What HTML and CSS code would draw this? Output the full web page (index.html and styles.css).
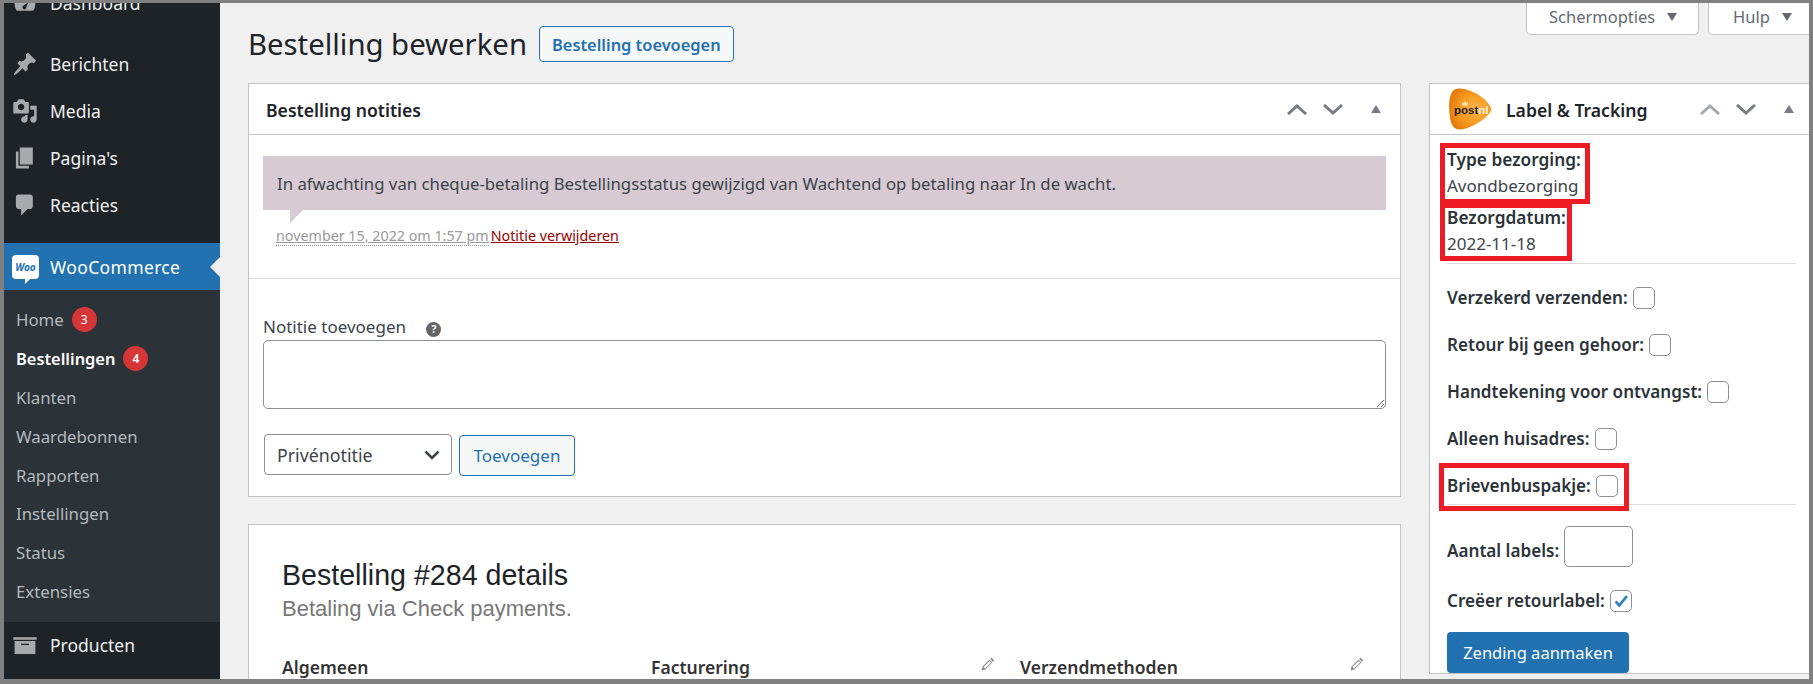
FILE: index.html
```html
<!DOCTYPE html>
<html lang="nl">

<head>
  <meta charset="UTF-8">
  <title>Bestelling bewerken</title>
  <link rel="stylesheet" href="styles.css">
</head>

<body>

  <div class="frame">

    <aside class="sidebar">
      <ul class="menu menu-first">
        <li class="menu-item">
          <svg class="menu-icon" viewBox="0 0 20 20"><path d="M3.76 16h12.48A7.97 7.97 0 0 0 18 11a8 8 0 0 0-16 0c0 1.9.66 3.64 1.76 5zM10 6a1 1 0 1 1 0 2 1 1 0 0 1 0-2zm-1 6l4-3-2 4a1.5 1.5 0 1 1-2-1z"/></svg>
          Dashboard
        </li>
      </ul>
      <ul class="menu">
        <li class="menu-item">
          <svg class="menu-icon" viewBox="0 0 20 20"><path d="M10.44 3.02l1.82-1.82 6.36 6.35-1.83 1.82c-1.05-.68-2.48-.57-3.41.36l-.75.75c-.92.93-1.04 2.35-.35 3.41l-1.83 1.82-2.41-2.41-2.8 2.79c-.42.42-3.38 2.71-3.8 2.29s1.86-3.39 2.28-3.81l2.79-2.79L4.1 9.36l1.83-1.82c1.05.69 2.48.57 3.4-.36l.75-.75c.93-.92 1.05-2.35.36-3.41z"/></svg>
          Berichten
        </li>
        <li class="menu-item">
          <svg class="menu-icon" viewBox="0 0 20 20"><path d="M13 11V4c0-.55-.45-1-1-1h-1.67L9 1H5L3.67 3H2c-.55 0-1 .45-1 1v7c0 .55.45 1 1 1h10c.55 0 1-.45 1-1zM7 4.5c1.38 0 2.5 1.12 2.5 2.5S8.38 9.5 7 9.5 4.5 8.38 4.5 7 5.62 4.5 7 4.5zM14 6h5v10.5c0 1.38-1.12 2.5-2.5 2.5S14 17.88 14 16.5s1.12-2.5 2.5-2.5c.17 0 .34.02.5.05V9h-3V6zm-4 8.05V13h2v3.5c0 1.38-1.12 2.5-2.5 2.5S7 17.88 7 16.5 8.12 14 9.5 14c.17 0 .34.02.5.05z"/></svg>
          Media
        </li>
        <li class="menu-item">
          <svg class="menu-icon" viewBox="0 0 20 20"><path d="M6 15V2h10v13H6zm-1 1h8v2H3V5h2v11z"/></svg>
          Pagina's
        </li>
        <li class="menu-item">
          <svg class="menu-icon" viewBox="0 0 20 20"><path d="M5 2h9c1.1 0 2 .9 2 2v7c0 1.1-.9 2-2 2h-2l-5 5v-5H5c-1.1 0-2-.9-2-2V4c0-1.1.9-2 2-2z"/></svg>
          Reacties
        </li>
      </ul>
      <ul class="menu menu-woo">
        <li class="menu-item menu-item-current">
          <span class="woo-logo"><span class="woo-word">Woo</span></span>
          WooCommerce
        </li>
        <li>
          <ul class="submenu">
            <li>Home <span class="badge">3</span></li>
            <li class="submenu-current">Bestellingen <span class="badge">4</span></li>
            <li>Klanten</li>
            <li>Waardebonnen</li>
            <li>Rapporten</li>
            <li>Instellingen</li>
            <li>Status</li>
            <li>Extensies</li>
          </ul>
        </li>
        <li class="menu-item">
          <svg class="menu-icon" viewBox="0 0 20 20"><path d="M19 4v2H1V4h18zM2 7h16v10H2V7zm11 3V9H7v1h6z"/></svg>
          Producten
        </li>
      </ul>
    </aside>

    <main class="content">

      <div class="page-head">
        <div class="title-row">
          <h1 class="page-title">Bestelling bewerken</h1>
          <span class="add-button">Bestelling toevoegen</span>
        </div>
        <div class="screen-tabs">
          <span class="screen-tab tab-options">Schermopties <i class="tab-arrow"></i></span>
          <span class="screen-tab tab-help">Hulp <i class="tab-arrow"></i></span>
        </div>
      </div>

      <div class="columns">

        <div class="col-main">

          <section class="panel panel-notes">
            <header class="panel-head">
              <h2>Bestelling notities</h2>
              <div class="panel-actions">
                <svg class="chevron" viewBox="0 0 20 11"><path d="M1 10l9-8 9 8"/></svg>
                <svg class="chevron" viewBox="0 0 20 11"><path d="M1 1l9 8 9-8"/></svg>
                <i class="collapse"></i>
              </div>
            </header>
            <div class="notes">
              <div class="note-bubble">In afwachting van cheque-betaling Bestellingsstatus gewijzigd van Wachtend op betaling naar In de wacht.</div>
              <p class="note-meta"><span class="note-date">november 15, 2022 om 1:57 pm</span><a class="note-delete">Notitie verwijderen</a></p>
            </div>
            <div class="add-note">
              <label class="add-label">Notitie toevoegen <span class="help-tip">?</span></label>
              <textarea class="note-input"></textarea>
              <div class="add-row">
                <div class="select-box">
                  Privénotitie
                  <svg class="select-arrow" viewBox="0 0 16 10"><path d="M1.5 1.5L8 8l6.5-6.5"/></svg>
                </div>
                <span class="secondary-button">Toevoegen</span>
              </div>
            </div>
          </section>

          <section class="panel panel-details">
            <h2 class="details-title">Bestelling #284 details</h2>
            <p class="details-sub">Betaling via Check payments.</p>
            <div class="details-grid">
              <h3>Algemeen</h3>
              <h3>Facturering
                <svg class="pencil" viewBox="0 0 14 14"><path d="M10.5.6l2.9 2.9-1.3 1.3-2.9-2.9zM8.5 2.6l2.9 2.9-7 7L.6 13.4l.9-3.8zM2.6 9.9l1.5 1.5 6-6L8.6 3.9z"/></svg>
              </h3>
              <h3>Verzendmethoden
                <svg class="pencil" viewBox="0 0 14 14"><path d="M10.5.6l2.9 2.9-1.3 1.3-2.9-2.9zM8.5 2.6l2.9 2.9-7 7L.6 13.4l.9-3.8zM2.6 9.9l1.5 1.5 6-6L8.6 3.9z"/></svg>
              </h3>
            </div>
          </section>

        </div>

        <section class="panel panel-label">
          <header class="panel-head">
            <div class="label-title">
              <svg class="postnl-logo" viewBox="0 0 42 42">
                <defs>
                  <radialGradient id="postnlFill" cx="0.62" cy="0.5" r="0.62">
                    <stop offset="0" stop-color="#ffb34d"/>
                    <stop offset="0.6" stop-color="#f79a1e"/>
                    <stop offset="1" stop-color="#e57d0c"/>
                  </radialGradient>
                </defs>
                <path d="M11 .5C22 1 36 9 41 18c2 3.500 1 6-1 8-6 7-18 14-28 15.500C5 42 2 37 1 30-.5 21-.5 10 3 4c2-3 5-3.700 8-3.500z" fill="url(#postnlFill)"/>
                <text class="postnl-word" x="5" y="26">post<tspan class="postnl-nl">nl</tspan></text>
                <path d="M13 14l1.500 1.300L16 12.800l1.500 2.500L19 14l-.7 3.500h-4.600z" fill="#ffe9b8"/>
              </svg>
              <h2>Label &amp; Tracking</h2>
            </div>
            <div class="panel-actions">
              <svg class="chevron chevron-off" viewBox="0 0 20 11"><path d="M1 10l9-8 9 8"/></svg>
              <svg class="chevron" viewBox="0 0 20 11"><path d="M1 1l9 8 9-8"/></svg>
              <i class="collapse"></i>
            </div>
          </header>

          <div class="label-body">
            <div class="delivery">
              <strong>Type bezorging:</strong>
              <span>Avondbezorging</span>
              <strong class="delivery-date">Bezorgdatum:</strong>
              <span>2022-11-18</span>
            </div>
            <div class="options">
              <div class="option"><b>Verzekerd verzenden:</b><span class="check"></span></div>
              <div class="option"><b>Retour bij geen gehoor:</b><span class="check"></span></div>
              <div class="option"><b>Handtekening voor ontvangst:</b><span class="check"></span></div>
              <div class="option"><b>Alleen huisadres:</b><span class="check"></span></div>
              <div class="option"><b>Brievenbuspakje:</b><span class="check"></span></div>
            </div>
            <div class="shipment">
              <div class="option option-count"><b>Aantal labels:</b><span class="count-input"></span></div>
              <div class="option option-return">
                <b>Creëer retourlabel:</b>
                <span class="check"><svg viewBox="0 0 20 20"><path d="M4 10.500l4 4.500 8.500-10.500"/></svg></span>
              </div>
              <span class="primary-button">Zending aanmaken</span>
            </div>
          </div>

          <!-- rode kaders uit de schermafbeelding -->
          <i class="mark mark-type"></i>
          <i class="mark mark-date"></i>
          <i class="mark mark-box"></i>
        </section>

      </div>
    </main>

  </div>

</body>

</html>
```

FILE: styles.css
```css
* {
  box-sizing: border-box;
}

html,
body {
  margin: 0;
  height: 100%;
}

body {
  font-family: "Noto Sans", "Open Sans", sans-serif;
  font-size: 17px;
  color: #3c434a;
}

ul {
  list-style: none;
  margin: 0;
  padding: 0;
}

.frame {
  display: flex;
  width: 1813px;
  height: 684px;
  overflow: hidden;
  background-color: #f0f0f1;
  border: solid #808080;
  border-width: 3px 4px 5px 4px;
}

/* zijbalk */
.sidebar {
  flex: none;
  width: 216px;
  background-color: #1d2327;
  color: #f0f0f1;
}

.menu-first {
  margin-top: -24px;
  margin-bottom: 14px;
}

.menu-woo {
  margin-top: 15px;
}

.menu-item {
  position: relative;
  display: flex;
  align-items: center;
  gap: 12px;
  height: 47px;
  padding-left: 8px;
  font-size: 17.5px;
}

.menu-icon {
  flex: none;
  width: 26px;
  height: 26px;
  fill: #a7aaad;
}

.menu-item-current {
  background-color: #2271b1;
  color: #fff;
  letter-spacing: 0.35px;
}

.menu-item-current::after {
  content: "";
  position: absolute;
  right: 0;
  top: 14px;
  border: 10px solid transparent;
  border-left-width: 0;
  border-right-color: #f0f0f1;
}

.woo-logo {
  position: relative;
  flex: none;
  display: flex;
  align-items: center;
  justify-content: center;
  width: 27px;
  height: 24px;
  margin-right: -1px;
  background-color: #fff;
  border-radius: 4px;
}

.woo-logo::after {
  content: "";
  position: absolute;
  left: 13px;
  bottom: -5px;
  border-top: 5px solid #fff;
  border-right: 5px solid transparent;
}

.woo-word {
  color: #2271b1;
  font-size: 10px;
  font-weight: 700;
  font-style: italic;
  letter-spacing: 0;
}

.submenu {
  background-color: #2c3338;
  padding: 10.6px 0;
  font-size: 16.8px;
  color: #b4b9be;
}

.submenu li {
  display: flex;
  align-items: center;
  gap: 8px;
  height: 38.8px;
  padding-left: 12px;
}

.submenu-current {
  color: #fff;
  font-size: 16.4px;
  font-weight: 600;
}

.badge {
  display: inline-flex;
  align-items: center;
  justify-content: center;
  width: 25px;
  height: 25px;
  border-radius: 50%;
  background-color: #d63638;
  color: #fff;
  font-size: 12px;
  font-weight: 400;
}

.submenu-current .badge {
  font-weight: 600;
}

/* inhoud */
.content {
  flex: none;
  width: 1589px;
  padding-left: 28px;
}

.page-head {
  display: flex;
  justify-content: space-between;
  align-items: flex-start;
  height: 80px;
}

.title-row {
  display: flex;
  align-items: center;
  gap: 12px;
  margin-top: 23px;
}

.page-title {
  margin: 0;
  font-size: 29.3px;
  font-weight: 400;
  line-height: 35px;
  color: #1d2327;
}

.add-button {
  display: flex;
  align-items: center;
  height: 36px;
  padding: 0 12px;
  border: 1px solid #2271b1;
  border-radius: 4px;
  background-color: #f6f7f7;
  color: #2271b1;
  font-size: 16.4px;
  font-weight: 600;
}

.screen-tabs {
  display: flex;
  gap: 9px;
  margin-right: -6px;
}

.screen-tab {
  display: flex;
  align-items: center;
  gap: 9px;
  height: 32px;
  padding-bottom: 4px;
  background-color: #fff;
  border: 1px solid #c3c4c7;
  border-top: none;
  border-radius: 0 0 5px 5px;
  color: #646970;
  font-size: 16.5px;
}

.tab-options {
  width: 173px;
  padding-left: 22px;
}

.tab-help {
  width: 107px;
  padding-left: 24px;
}

.tab-arrow {
  border-top: 8px solid #646970;
  border-left: 5.5px solid transparent;
  border-right: 5.5px solid transparent;
  margin-left: 3px;
}

.columns {
  display: flex;
  align-items: flex-start;
  gap: 28px;
}

.col-main {
  flex: none;
  width: 1153px;
}

.panel {
  background-color: #fff;
  border: 1px solid #c3c4c7;
}

.panel-head {
  display: flex;
  align-items: center;
  justify-content: space-between;
  height: 51px;
  padding: 0 19px 0 17px;
  border-bottom: 1px solid #c3c4c7;
}

.panel-head h2 {
  margin: 2px 0 0;
  font-size: 17.6px;
  font-weight: 600;
  color: #1d2327;
}

.panel-actions {
  display: flex;
  align-items: center;
}

.chevron {
  width: 20px;
  height: 11px;
  fill: none;
  stroke: #787c82;
  stroke-width: 3;
}

.chevron + .chevron {
  margin-left: 16px;
}

.chevron-off {
  stroke: #a7aaad;
}

.collapse {
  margin-left: 28px;
  border-bottom: 8px solid #787c82;
  border-left: 5.5px solid transparent;
  border-right: 5.5px solid transparent;
}

/* notities */
.panel-notes {
  height: 414px;
  margin-bottom: 27px;
}

.notes {
  height: 144px;
  padding: 21px 14px 0;
  border-bottom: 1px solid #dcdcde;
}

.note-bubble {
  position: relative;
  display: flex;
  align-items: center;
  height: 54px;
  padding: 0 14px;
  background-color: #d7cad2;
  font-size: 16.75px;
}

.note-bubble::after {
  content: "";
  position: absolute;
  left: 27px;
  top: 100%;
  border-top: 13px solid #d7cad2;
  border-right: 13px solid transparent;
}

.note-meta {
  margin: 15px 0 0 13px;
  font-size: 14.3px;
  line-height: 22px;
  white-space: nowrap;
}

.note-date {
  color: #999;
  border-bottom: 1px dotted #999;
  text-decoration: underline;
  margin-right: 2px;
}

.note-delete {
  color: #900;
  text-decoration: underline;
}

.add-note {
  padding: 36px 14px 0;
}

.add-label {
  display: block;
  height: 25px;
  font-size: 17px;
  line-height: 24px;
}

.help-tip {
  display: inline-flex;
  align-items: center;
  justify-content: center;
  width: 15px;
  height: 15px;
  margin-left: 16px;
  border-radius: 50%;
  background-color: #666;
  color: #fff;
  font-size: 11px;
  font-weight: 700;
  vertical-align: 0;
}

.note-input {
  display: block;
  width: 100%;
  height: 69px;
  margin: 0;
  border: 1px solid #8c8f94;
  border-radius: 5px;
  background-color: #fff;
}

.add-row {
  display: flex;
  gap: 7px;
  margin: 25px 0 0 1px;
}

.select-box {
  display: flex;
  align-items: center;
  justify-content: space-between;
  width: 188px;
  height: 41px;
  padding: 0 11px 0 12px;
  border: 1px solid #8c8f94;
  border-radius: 4px;
  background-color: #fff;
  font-size: 17.8px;
}

.select-arrow {
  width: 16px;
  height: 10px;
  fill: none;
  stroke: #3c434a;
  stroke-width: 2.5;
}

.secondary-button {
  display: flex;
  align-items: center;
  justify-content: center;
  width: 116px;
  height: 41px;
  margin-top: 1px;
  border: 1px solid #2271b1;
  border-radius: 4px;
  background-color: #f6f7f7;
  color: #2271b1;
  font-size: 17px;
}

/* details */
.panel-details {
  height: 300px;
  padding: 32px 0 0 33px;
}

.details-title {
  margin: 0;
  font-family: "Liberation Sans", Arial, sans-serif;
  font-size: 28.6px;
  font-weight: 400;
  line-height: 36px;
  color: #1d2327;
}

.details-sub {
  margin: 2px 0 0;
  font-family: "Liberation Sans", Arial, sans-serif;
  font-size: 22px;
  line-height: 28px;
  color: #777;
}

.details-grid {
  display: grid;
  grid-template-columns: repeat(3, 344px);
  column-gap: 25px;
  margin-top: 32px;
}

.details-grid h3 {
  display: flex;
  justify-content: space-between;
  align-items: flex-start;
  margin: 0;
  font-size: 17.5px;
  font-weight: 600;
  line-height: 24px;
  color: #333;
}

.pencil {
  width: 14px;
  height: 14px;
  margin-top: 2px;
  fill: #8c8f94;
}

/* label en tracking */
.panel-label {
  position: relative;
  flex: none;
  width: 385px;
}

.label-title {
  display: flex;
  align-items: center;
  gap: 15px;
  margin-left: 2px;
}

.postnl-logo {
  width: 42px;
  height: 42px;
}

.postnl-word {
  font-family: "Liberation Sans", Arial, sans-serif;
  font-size: 11.5px;
  font-weight: 700;
  fill: #1d2327;
}

.postnl-nl {
  fill: #fff0dc;
}

.label-body {
  padding: 12px 17px 0;
  font-size: 17px;
  line-height: 26px;
}

.delivery {
  display: flex;
  flex-direction: column;
  padding-bottom: 6px;
  border-bottom: 1px solid #dcdcde;
}

.delivery strong {
  font-size: 17.3px;
  font-weight: 600;
  color: #2c3338;
}

.option b {
  font-size: 17.1px;
  font-weight: 600;
  color: #2c3338;
}

.delivery-date {
  margin-top: 6px;
}

.options {
  display: flex;
  flex-direction: column;
  gap: 23px;
  padding: 22px 0 6px;
  border-bottom: 1px solid #dcdcde;
}

.option {
  display: flex;
  align-items: center;
  gap: 5px;
  height: 24px;
}

.check {
  display: flex;
  align-items: center;
  justify-content: center;
  flex: none;
  width: 22px;
  height: 22px;
  border: 1px solid #8c8f94;
  border-radius: 5px;
  background-color: #fff;
}

.check svg {
  width: 18px;
  height: 18px;
  fill: none;
  stroke: #2e7fc1;
  stroke-width: 3;
}

.shipment {
  padding-top: 27px;
}

.option-count {
  height: 28px;
  margin-bottom: 42px;
  align-items: center;
}

.option-count b {
  margin-top: 10px;
}

.count-input {
  flex: none;
  width: 69px;
  height: 41px;
  border: 1px solid #8c8f94;
  border-radius: 5px;
  background-color: #fff;
}

.option-return {
  margin-top: -13px;
}

.primary-button {
  display: flex;
  align-items: center;
  justify-content: center;
  width: 182px;
  height: 41px;
  margin-top: 19px;
  border-radius: 4px;
  background-color: #2271b1;
  color: #fff;
  font-size: 16.5px;
}

.mark {
  position: absolute;
  border: 5px solid #ed1c24;
}

.mark-type {
  left: 10px;
  top: 59px;
  width: 150px;
  height: 61px;
}

.mark-date {
  left: 10px;
  top: 119px;
  width: 132px;
  height: 58px;
}

.mark-box {
  left: 9px;
  top: 379px;
  width: 190px;
  height: 48px;
}
```
